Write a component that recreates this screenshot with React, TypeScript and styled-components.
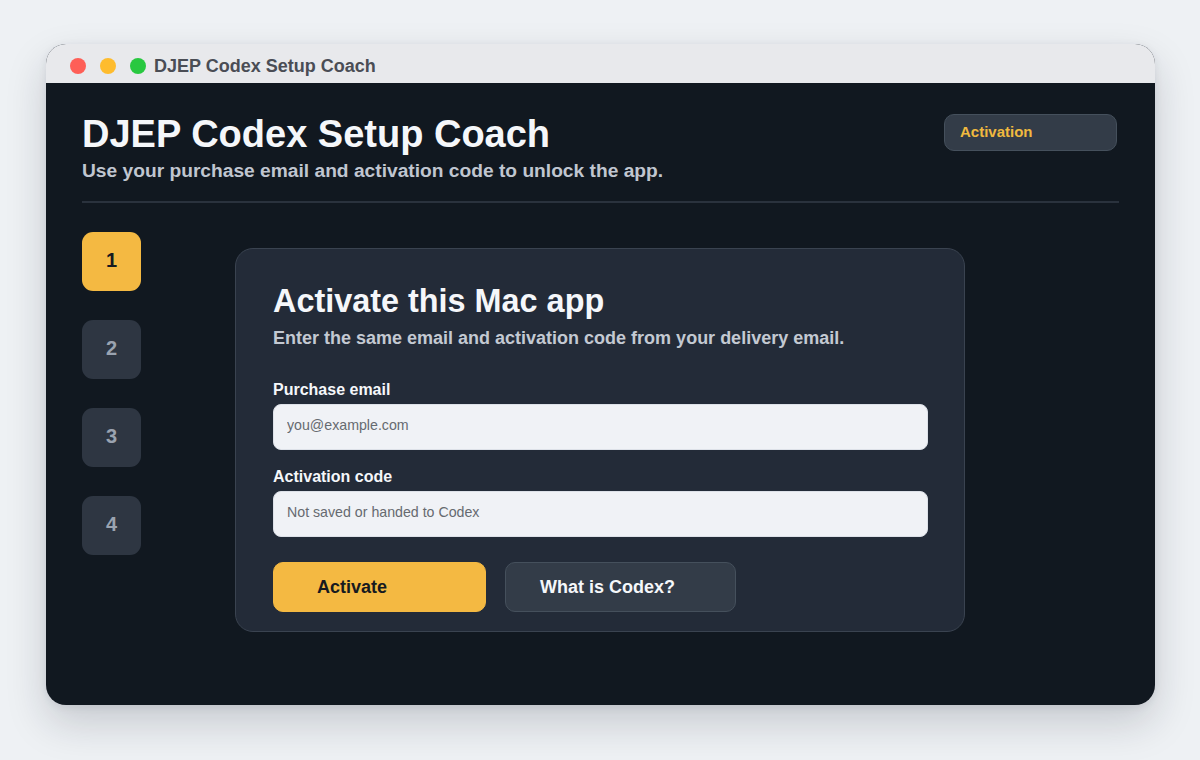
import styled, { createGlobalStyle } from 'styled-components'

const GlobalStyle = createGlobalStyle`
  html, body {
    margin: 0;
    padding: 0;
    background: #eef1f4;
    font-family: 'Liberation Sans', Arial, sans-serif;
  }
  * {
    box-sizing: border-box;
  }
`

const steps = [1, 2, 3, 4]

export default function App() {
  return (
    <>
      <GlobalStyle />
      <Page>
        <Window>
          <TitleBar>
            <Light color="#fe5f57" />
            <Light color="#febc2e" />
            <Light color="#28c840" />
            <WindowTitle>DJEP Codex Setup Coach</WindowTitle>
          </TitleBar>
          <Body>
            <Header>
              <div>
                <Title>DJEP Codex Setup Coach</Title>
                <Subtitle>Use your purchase email and activation code to unlock the app.</Subtitle>
              </div>
              <Badge>Activation</Badge>
            </Header>
            <Divider />
            <Main>
              <Steps>
                {steps.map((n) => (
                  <Step key={n} active={n === 1}>
                    {n}
                  </Step>
                ))}
              </Steps>
              <Card>
                <CardTitle>Activate this Mac app</CardTitle>
                <CardText>Enter the same email and activation code from your delivery email.</CardText>
                <Field>
                  <Label>Purchase email</Label>
                  <Input type="email" placeholder="you@example.com" />
                </Field>
                <Field>
                  <Label>Activation code</Label>
                  <Input type="text" placeholder="Not saved or handed to Codex" />
                </Field>
                <Actions>
                  <Button primary>Activate</Button>
                  <Button>What is Codex?</Button>
                </Actions>
              </Card>
            </Main>
          </Body>
        </Window>
      </Page>
    </>
  )
}

const Page = styled.div`
  width: 1200px;
  height: 760px;
  padding: 44px 45px 0 46px;
`
const Window = styled.div`
  width: 1109px;
  height: 661px;
  border-radius: 20px;
  overflow: hidden;
  display: flex;
  flex-direction: column;
  background: #111820;
  box-shadow: 0 18px 40px rgba(20, 30, 45, 0.18), 0 2px 8px rgba(20, 30, 45, 0.08);
`
const TitleBar = styled.div`
  height: 39px;
  flex-shrink: 0;
  display: flex;
  align-items: center;
  gap: 14px;
  padding: 5px 0 0 24px;
  background: #e8e9ec;
`
const Light = styled.span<{ color: string }>`
  width: 16px;
  height: 16px;
  border-radius: 50%;
  background: ${(p) => p.color};
`
const WindowTitle = styled.span`
  margin-left: -6px;
  font-size: 18px;
  font-weight: 700;
  color: #4a4d55;
`
const Body = styled.div`
  flex: 1;
  padding: 30px 36px 0 36px;
`
const Header = styled.div`
  display: flex;
  justify-content: space-between;
  align-items: flex-start;
`
const Title = styled.h1`
  margin: 0;
  font-size: 38px;
  line-height: 42px;
  font-weight: 700;
  color: #f5f7fa;
`
const Subtitle = styled.p`
  margin: 5px 0 0;
  font-size: 19.2px;
  line-height: 22px;
  font-weight: 700;
  color: #c0c6d0;
`
const Badge = styled.div`
  width: 173px;
  height: 37px;
  margin: 1px 2px 0 0;
  display: flex;
  align-items: center;
  padding: 0 0 3px 15px;
  border-radius: 10px;
  background: #333c48;
  border: 1px solid #45505c;
  color: #f0b93f;
  font-size: 15px;
  font-weight: 700;
`
const Divider = styled.div`
  height: 2px;
  margin-top: 19px;
  background: #2a323d;
`
const Main = styled.div`
  display: flex;
  gap: 94px;
  margin-top: 29px;
`
const Steps = styled.div`
  display: flex;
  flex-direction: column;
  gap: 29px;
`
const Step = styled.div<{ active?: boolean }>`
  width: 59px;
  height: 59px;
  padding-bottom: 2px;
  border-radius: 11px;
  display: flex;
  align-items: center;
  justify-content: center;
  font-size: 20px;
  font-weight: 700;
  background: ${(p) => (p.active ? '#f4b942' : '#2e3642')};
  color: ${(p) => (p.active ? '#161a20' : '#9aa3b0')};
`
const Card = styled.div`
  width: 730px;
  height: 384px;
  margin-top: 16px;
  padding: 34px 37px 0 37px;
  border-radius: 18px;
  background: #232b38;
  border: 1px solid #3a4350;
`
const CardTitle = styled.h2`
  margin: 0;
  font-size: 32.4px;
  line-height: 36px;
  font-weight: 700;
  color: #f5f7fa;
`
const CardText = styled.p`
  margin: 9px 0 0;
  font-size: 18px;
  line-height: 20px;
  font-weight: 700;
  color: #c3c9d2;
`
const Field = styled.label`
  display: flex;
  flex-direction: column;
  gap: 5px;
  margin-top: 32px;

  & + & {
    margin-top: 17px;
  }
`
const Label = styled.span`
  font-size: 16px;
  line-height: 19px;
  font-weight: 700;
  color: #f5f7fa;
`
const Input = styled.input`
  width: 655px;
  height: 46px;
  padding: 0 13px 5px;
  border: 1px solid #dde1e8;
  border-radius: 8px;
  background: #f0f2f6;
  font-family: 'Liberation Sans', Arial, sans-serif;
  font-size: 14.2px;
  color: #222;
  outline: none;

  &::placeholder {
    color: #666a70;
  }
`
const Actions = styled.div`
  display: flex;
  gap: 19px;
  margin-top: 25px;
`
const Button = styled.button<{ primary?: boolean }>`
  height: 50px;
  width: ${(p) => (p.primary ? '213px' : '231px')};
  padding: 0 0 0 ${(p) => (p.primary ? '43px' : '34px')};
  text-align: left;
  border-radius: 10px;
  font-family: 'Liberation Sans', Arial, sans-serif;
  font-size: 18px;
  font-weight: 700;
  cursor: pointer;
  background: ${(p) => (p.primary ? '#f4b942' : '#333c48')};
  border: 1px solid ${(p) => (p.primary ? '#f4b942' : '#45505c')};
  color: ${(p) => (p.primary ? '#161a20' : '#f5f7fa')};
`
